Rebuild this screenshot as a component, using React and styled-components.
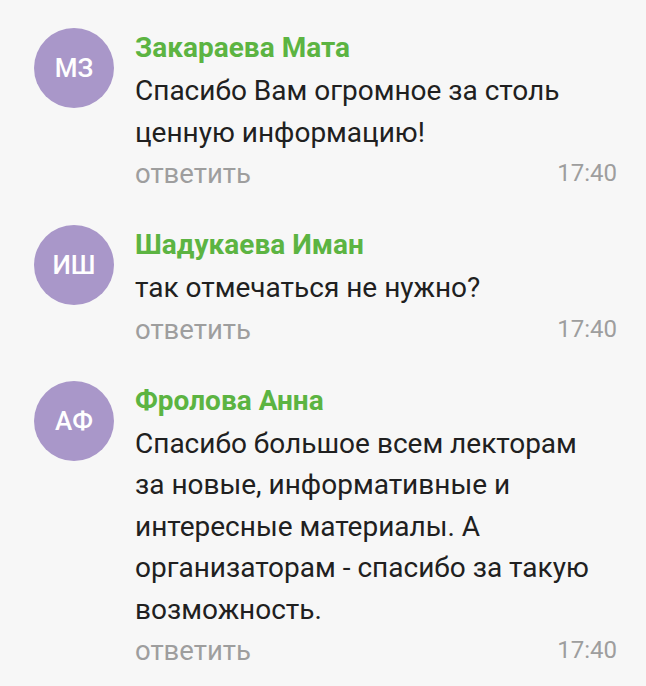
import React from "react";
import styled, { createGlobalStyle } from "styled-components";

const Global = createGlobalStyle`
  html, body { margin: 0; padding: 0; background: #f7f7f7; }
  body { font-family: Roboto, "Noto Sans", sans-serif; -webkit-font-smoothing: antialiased; }
`;

const List = styled.div`
  display: flex;
  flex-direction: column;
  gap: 31px;
  padding: 28px 29px 0 34px;
  background: #f7f7f7;
  min-height: 686px;
  box-sizing: border-box;
`;

const Item = styled.div`
  display: flex;
  align-items: flex-start;
  gap: 21px;
`;

const Avatar = styled.div`
  flex: 0 0 80px;
  width: 80px;
  height: 80px;
  border-radius: 50%;
  background: #a997c9;
  color: #ffffff;
  display: flex;
  align-items: center;
  justify-content: center;
  font-size: 26px;
  font-weight: 500;
`;

const Body = styled.div`
  flex: 1;
  display: flex;
  flex-direction: column;
  min-width: 0;
`;

const Name = styled.div`
  color: #5cb442;
  font-weight: 700;
  font-size: 28px;
  line-height: 40px;
  margin-bottom: 2px;
`;

const Text = styled.div`
  color: #202020;
  font-size: 28px;
  line-height: 41.5px;
  padding-right: 20px;
`;

const Footer = styled.div`
  display: flex;
  justify-content: space-between;
  align-items: center;
  height: 40px;
  margin-top: 1px;
  color: #9e9e9e;
`;

const Reply = styled.span`
  font-size: 27.5px;
  line-height: 40px;
`;

const Time = styled.span`
  font-size: 24px;
  line-height: 40px;
  margin-top: -2px;
`;

const comments = [
  {
    initials: "МЗ",
    name: "Закараева Мата",
    text: "Спасибо Вам огромное за столь ценную информацию!",
  },
  {
    initials: "ИШ",
    name: "Шадукаева Иман",
    text: "так отмечаться не нужно?",
  },
  {
    initials: "АФ",
    name: "Фролова Анна",
    text:
      "Спасибо большое всем лекторам за новые, информативные и интересные материалы. А организаторам - спасибо за такую возможность.",
  },
];

export default function App() {
  return (
    <>
      <Global />
      <List>
        {comments.map((c) => (
          <Item key={c.name}>
            <Avatar>{c.initials}</Avatar>
            <Body>
              <Name>{c.name}</Name>
              <Text>{c.text}</Text>
              <Footer>
                <Reply>ответить</Reply>
                <Time>17:40</Time>
              </Footer>
            </Body>
          </Item>
        ))}
      </List>
    </>
  );
}
